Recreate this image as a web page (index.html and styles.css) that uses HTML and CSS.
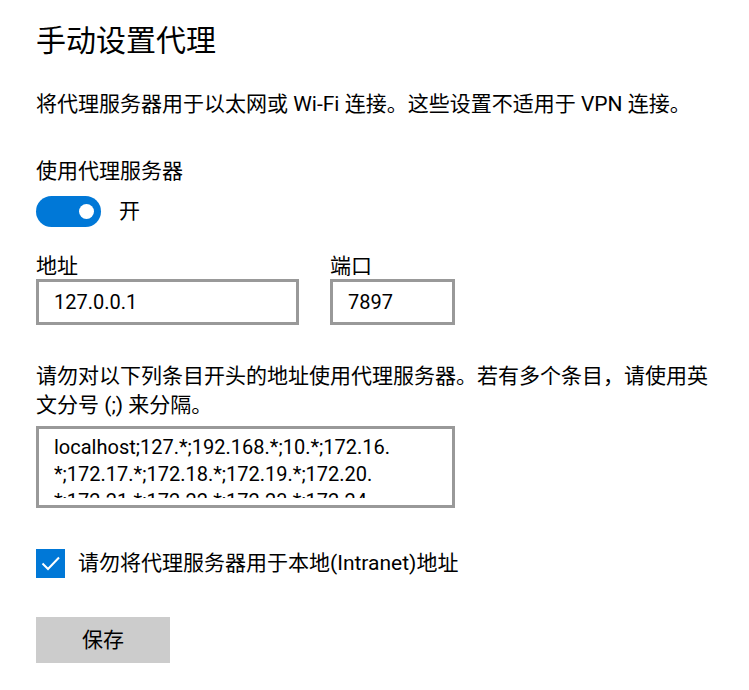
FILE: index.html
```html
<!DOCTYPE html>
<html lang="zh-CN">
<head>
<meta charset="utf-8">
<title>手动设置代理</title>
<link rel="stylesheet" href="styles.css">
</head>
<body>
<main class="page">
  <h1 class="title">手动设置代理</h1>
  <p class="desc">将代理服务器用于以太网或 Wi-Fi 连接。这些设置不适用于 VPN 连接。</p>

  <div class="section-label">使用代理服务器</div>
  <div class="toggle-row">
    <span class="toggle"><span class="knob"></span></span>
    <span class="toggle-text">开</span>
  </div>

  <div class="fields">
    <div class="field">
      <label class="field-label">地址</label>
      <div class="textbox addr">127.0.0.1</div>
    </div>
    <div class="field">
      <label class="field-label">端口</label>
      <div class="textbox port">7897</div>
    </div>
  </div>

  <p class="exceptions">请勿对以下列条目开头的地址使用代理服务器。若有多个条目，请使用英文分号 (;) 来分隔。</p>
  <div class="textbox multiline">
    <div class="lines">
      <div class="line">localhost;127.*;192.168.*;10.*;172.16.</div>
      <div class="line">*;172.17.*;172.18.*;172.19.*;172.20.</div>
      <div class="line">*;172.21.*;172.22.*;172.23.*;172.24.</div>
    </div>
  </div>

  <div class="check-row">
    <span class="checkbox">
      <svg viewBox="0 0 29 29" width="29" height="29"><polyline points="6.5,14.5 12,20 23,8.5" fill="none" stroke="#fff" stroke-width="2"/></svg>
    </span>
    <span class="check-text">请勿将代理服务器用于本地(Intranet)地址</span>
  </div>

  <button class="save">保存</button>
</main>
</body>
</html>
```

FILE: styles.css
```css
html, body {
  margin: 0;
  padding: 0;
  background: #fff;
}
body {
  font-family: Roboto, "Noto Sans CJK SC", sans-serif;
  font-size: 21px;
  line-height: 29px;
  color: #000;
}
.page {
  padding: 0 0 0 36px;
  display: flex;
  flex-direction: column;
  align-items: flex-start;
}
.title {
  margin: 21px 0 0;
  font-size: 30px;
  line-height: 40px;
  font-weight: 400;
}
.desc {
  margin: 29px 0 0;
}
.section-label {
  margin-top: 38px;
}
.toggle-row {
  margin-top: 10px;
  display: flex;
  align-items: center;
  gap: 18px;
  height: 31px;
}
.toggle {
  width: 65px;
  height: 31px;
  border-radius: 16px;
  background: #0078d7;
  display: flex;
  align-items: center;
  justify-content: flex-end;
  padding-right: 7px;
  box-sizing: border-box;
}
.knob {
  width: 15px;
  height: 15px;
  border-radius: 50%;
  background: #fff;
}
.fields {
  margin-top: 26px;
  display: flex;
  gap: 31px;
}
.field {
  display: flex;
  flex-direction: column;
}
.field-label {
  line-height: 26px;
}
.textbox {
  border: 3px solid #999;
  box-sizing: border-box;
  padding: 0 15px;
  font-size: 20px;
  line-height: 40px;
  height: 46px;
  white-space: nowrap;
  overflow: hidden;
}
.addr { width: 263px; }
.port { width: 125px; }
.exceptions {
  margin: 37px 0 0;
  width: 685px;
}
.multiline {
  margin-top: 6px;
  width: 419px;
  height: 82px;
  line-height: 27px;
  padding-top: 5px;
}
.lines {
  height: 64px;
  overflow: hidden;
}
.check-row {
  margin-top: 41px;
  display: flex;
  align-items: center;
  gap: 13px;
  height: 29px;
}
.checkbox {
  width: 29px;
  height: 29px;
  background: #0078d7;
  display: block;
}
.checkbox svg { display: block; }
.save {
  margin-top: 39px;
  width: 134px;
  height: 46px;
  border: none;
  background: #ccc;
  font: inherit;
  color: #000;
  padding: 0;
}
```
